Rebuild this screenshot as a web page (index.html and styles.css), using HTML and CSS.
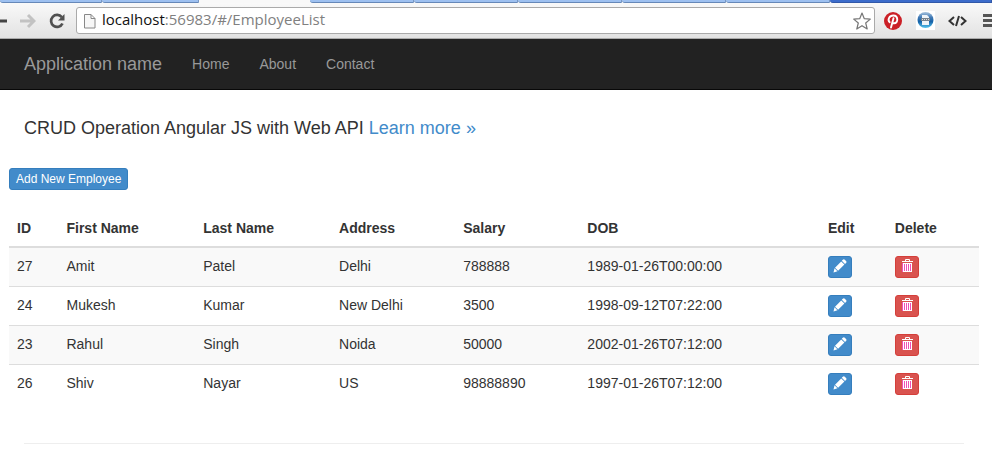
FILE: index.html
```
<!DOCTYPE html>
<html lang="en">
<head>
<meta charset="utf-8">
<title>Employee List</title>
<link rel="stylesheet" href="styles.css">
</head>
<body>
<svg class="sprite" aria-hidden="true">
  <symbol id="pencil" viewBox="0 0 14 14"><path fill="#fff" d="M9.800.8q1-1 2 0l1.200 1.200q1 1 0 2l-1 1L8.800 1.800zM8.200 2.400l3.200 3.200-6.300 6.200-3.100-3.100zM1.500 9.300l3 3L.5 13.500z"/></symbol>
  <symbol id="trash" viewBox="0 0 14 14"><path fill="#f050b8" d="M2 4h10v9H2z"/><path fill="none" stroke="#fff" d="M5.500 2V.5h4V2M3.500 4v8.500h8V4M5.500 5v7M7.500 5v7M9.500 5v7"/><path fill="#fff" d="M2 2h11v1H2zM3 4h9v1H3zM3 12h9v1H3z"/></symbol>
</svg>
<header class="browser">
  <div class="tabs"><span></span><span></span><span class="active"></span><span></span><span></span><span></span><span></span><span></span><span class="frame"></span></div>
  <div class="toolbar">
    <button class="tool back" aria-label="Back"><svg width="7" height="16" viewBox="0 0 7 16"><path d="M0 8h7" stroke="#444" stroke-width="3"/></svg></button>
    <button class="tool" aria-label="Forward"><svg width="16" height="16" viewBox="0 0 16 16"><path d="M0 8h13M8 2l6 6-6 6" fill="none" stroke="#c2c2c2" stroke-width="3"/></svg></button>
    <button class="tool reload" aria-label="Reload"><svg width="16" height="16" viewBox="0 0 16 16"><path d="M12.800 4.200A6 6 0 1 0 13.500 10.500" fill="none" stroke="#505050" stroke-width="2.700"/><path d="M15.500 1v6.500H9z" fill="#505050"/></svg></button>
    <div class="address">
      <svg width="12" height="16" viewBox="0 0 12 16"><path d="M.5 1.500h6.500l4 4v9.500H.5zM7 1.500v4h4" fill="#f7f7f7" stroke="#888"/></svg>
      <span class="url">localhost<span class="path">:56983/#/EmployeeList</span></span>
      <button class="tool" aria-label="Bookmark this page"><svg width="18" height="18" viewBox="0 0 18 18"><path d="M9 1l2.300 5.700 6 .4-4.600 3.900 1.500 6L9 13.700 3.800 17l1.500-6L.7 7.100l6-.4z" fill="#fff" stroke="#777" stroke-width="1.200" stroke-linejoin="round"/></svg></button>
    </div>
    <div class="extensions">
      <button class="tool" aria-label="Pinterest"><svg width="18" height="18" viewBox="0 0 18 18"><circle cx="9" cy="9" r="9" fill="#cb2027"/><path d="M5.600 10.200C3.200 7.500 5.400 3.500 9.300 3.500c5.200 0 5.100 7.800.8 7.800-1.100 0-1.700-.7-1.700-.7M9.500 6.200L7 15.500" fill="none" stroke="#fff" stroke-width="1.900" stroke-linecap="round"/></svg></button>
      <button class="tool" aria-label="JSON viewer"><svg width="19" height="19" viewBox="0 0 19 19"><defs><linearGradient id="orb" x2="0" y2="1"><stop offset="0" stop-color="#a9c4de"/><stop offset=".35" stop-color="#3f78b4"/><stop offset=".6" stop-color="#1562a8"/><stop offset="1" stop-color="#55c4ee"/></linearGradient></defs><path fill="#fff" d="M0 0h19v19H0z"/><circle cx="9.500" cy="9" r="8" fill="url(#orb)"/><path d="M6 4h5l2 2v8H6z" fill="#eef3f8"/><path d="M5 7h9v3H5z" fill="#76828e"/><path d="M6 8.500h7" stroke="#ddd" stroke-dasharray="1 1"/></svg></button>
      <button class="tool" aria-label="Source"><svg width="19" height="12" viewBox="0 0 19 12"><path d="M6 2L1.500 6 6 10M13 2l4.500 4L13 10M11 1L8 11" fill="none" stroke="#333" stroke-width="2"/></svg></button>
      <button class="tool" aria-label="Menu"><svg width="9" height="14" viewBox="0 0 9 14"><path d="M0 1.500h9M0 6.500h9M0 11.500h9" stroke="#555" stroke-width="3"/></svg></button>
    </div>
  </div>
</header>
<nav class="navbar">
  <a class="brand" href="#">Application name</a>
  <a href="#">Home</a>
  <a href="#">About</a>
  <a href="#">Contact</a>
</nav>
<main>
  <p class="lead">CRUD Operation Angular JS with Web API <a href="#">Learn more »</a></p>
  <button class="btn">Add New Employee</button>
  <table>
    <colgroup><col class="c-id"><col class="c-first"><col class="c-last"><col class="c-address"><col class="c-salary"><col class="c-dob"><col class="c-edit"><col class="c-delete"></colgroup>
    <thead><tr><th>ID</th><th>First Name</th><th>Last Name</th><th>Address</th><th>Salary</th><th>DOB</th><th>Edit</th><th>Delete</th></tr></thead>
    <tbody>
      <tr><td>27</td><td>Amit</td><td>Patel</td><td>Delhi</td><td>788888</td><td>1989-01-26T00:00:00</td><td><button class="btn" aria-label="Edit"><svg width="14" height="14"><use href="#pencil"/></svg></button></td><td><button class="btn danger" aria-label="Delete"><svg width="14" height="14"><use href="#trash"/></svg></button></td></tr>
      <tr><td>24</td><td>Mukesh</td><td>Kumar</td><td>New Delhi</td><td>3500</td><td>1998-09-12T07:22:00</td><td><button class="btn" aria-label="Edit"><svg width="14" height="14"><use href="#pencil"/></svg></button></td><td><button class="btn danger" aria-label="Delete"><svg width="14" height="14"><use href="#trash"/></svg></button></td></tr>
      <tr><td>23</td><td>Rahul</td><td>Singh</td><td>Noida</td><td>50000</td><td>2002-01-26T07:12:00</td><td><button class="btn" aria-label="Edit"><svg width="14" height="14"><use href="#pencil"/></svg></button></td><td><button class="btn danger" aria-label="Delete"><svg width="14" height="14"><use href="#trash"/></svg></button></td></tr>
      <tr><td>26</td><td>Shiv</td><td>Nayar</td><td>US</td><td>98888890</td><td>1997-01-26T07:12:00</td><td><button class="btn" aria-label="Edit"><svg width="14" height="14"><use href="#pencil"/></svg></button></td><td><button class="btn danger" aria-label="Delete"><svg width="14" height="14"><use href="#trash"/></svg></button></td></tr>
    </tbody>
  </table>
  <hr>
</main>
</body>
</html>
```
FILE: styles.css
```
* { box-sizing: border-box; }
body {
  margin: 0;
  background: #fff;
  color: #333;
  font: 14px/20px "Liberation Sans", Arial, sans-serif;
}
a { color: #428bca; text-decoration: none; }
svg { display: block; flex: none; }
.sprite { position: absolute; width: 0; height: 0; }

.tabs {
  display: grid;
  grid-template-columns: 102fr 97fr 111fr 104fr 104fr 104fr 104fr 104fr 162fr;
  height: 3px;
  background: #f8f8f8;
}
.tabs span {
  background: #9dc0f0;
  border-bottom: 1px solid #6688b8;
  border-right: 1px solid #7898c4;
  border-bottom-left-radius: 3px;
}
.tabs .active { background: #f8f8f8; border: 0; }
.tabs .frame { background: #3c6ccb; border-color: #3158a8; }
.toolbar {
  display: flex;
  align-items: center;
  height: 36px;
  background: linear-gradient(#f9f9f9, #e2e2e2);
  border-bottom: 1px solid #aaa;
  overflow: hidden;
}
.tool { flex: none; padding: 0; border: 0; background: none; }
.back { margin-right: 13px; }
.reload { margin: 0 11px 0 13px; }
.address {
  display: flex;
  flex: 1;
  align-items: center;
  gap: 6px;
  height: 27px;
  padding: 0 3px 0 7px;
  background: #fff;
  border: 1px solid #aaa;
  border-radius: 3px;
}
.url {
  flex: 1;
  padding-bottom: 2px;
  color: #111;
  font: 15px/23px "Open Sans", "Noto Sans", sans-serif;
}
.path { color: #808080; }
.extensions { display: flex; align-items: center; gap: 13px; margin-left: 9px; }
.extensions .tool:first-child { margin-right: 1px; }
.extensions .tool:last-child { margin-left: 3px; }

.navbar {
  display: flex;
  align-items: center;
  gap: 30px;
  height: 51px;
  padding: 0 24px;
  background: #222;
  border-bottom: 1px solid #080808;
}
.navbar a { color: #999; }
.navbar .brand { font-size: 18px; }

main { padding: 28px 13px 0 9px; }
.lead { margin: 0 15px 30px; font-size: 18px; }
.btn {
  display: block;
  height: 22px;
  padding: 0 6px;
  color: #fff;
  background: #428bca;
  border: 1px solid #357ebd;
  border-radius: 3px;
  font: 12px/18px "Liberation Sans", Arial, sans-serif;
}
td .btn { width: 24px; padding: 0 4px; margin-top: 1px; }
td .btn svg { margin-top: -2px; }
.danger { background: #d9534f; border-color: #d43f3a; }

table {
  width: 100%;
  margin: 20px 0 39px;
  table-layout: fixed;
  border-spacing: 0;
}
.c-id { width: 5.1%; }
.c-first { width: 14.1%; }
.c-last { width: 14%; }
.c-address { width: 12.8%; }
.c-salary { width: 12.8%; }
.c-dob { width: 24.8%; }
.c-edit { width: 6.9%; }
.c-delete { width: 9.5%; }
th, td { padding: 8px; text-align: left; vertical-align: top; }
th { border-bottom: 2px solid #ddd; }
td { height: 39px; border-bottom: 1px solid #ddd; }
td:nth-child(n+7) { padding-top: 7px; padding-bottom: 7px; }
tbody tr:nth-child(odd) { background: #f9f9f9; }
tbody tr:last-child td { border: 0; }
hr { margin: 0 15px; border: 0; border-top: 1px solid #eee; }
```
